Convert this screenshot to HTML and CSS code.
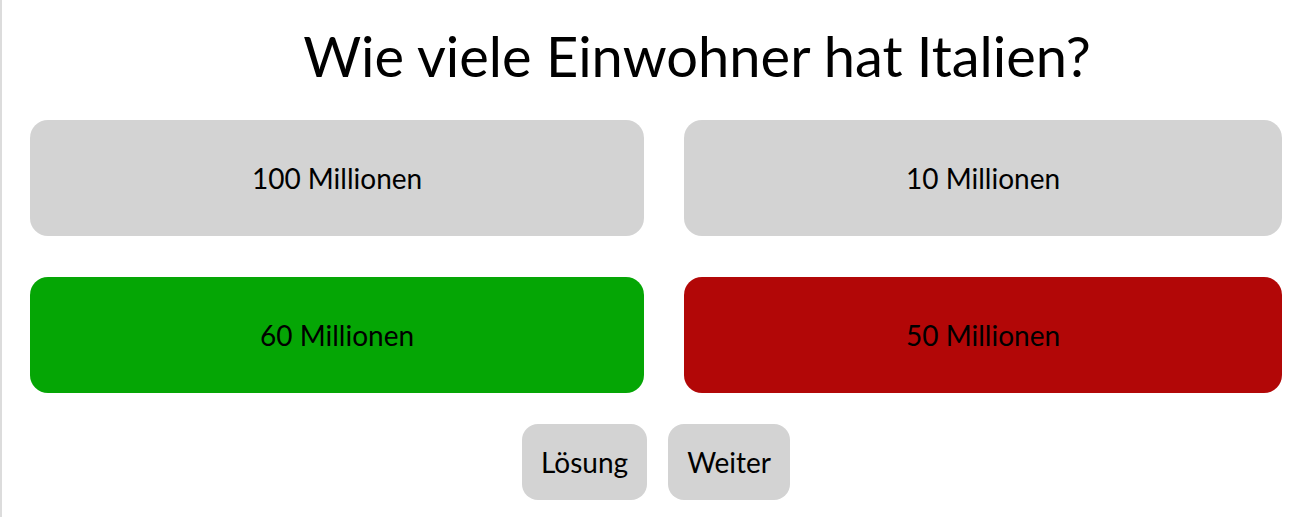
FILE: index.html
```html
<!DOCTYPE html>
<html lang="de">
<head>
<meta charset="utf-8">
<title>Quiz</title>
<link rel="stylesheet" href="styles.css">
</head>
<body>
<main class="quiz">
  <h1 class="question">Wie viele Einwohner hat Italien?</h1>
  <div class="answers">
    <div class="answer">100 Millionen</div>
    <div class="answer">10 Millionen</div>
    <div class="answer answer--correct">60 Millionen</div>
    <div class="answer answer--wrong">50 Millionen</div>
  </div>
  <div class="controls">
    <button class="control" type="button">Lösung</button>
    <button class="control" type="button">Weiter</button>
  </div>
</main>
</body>
</html>
```

FILE: styles.css
```css
html, body {
  margin: 0;
  padding: 0;
  background: #ffffff;
}

body {
  font-family: "Lato", "Open Sans", sans-serif;
  color: #000000;
}

.quiz {
  box-sizing: border-box;
  width: 1311px;
  height: 517px;
  border-left: 2px solid #dcdcdc;
  padding: 0 29px 0 28px;
  display: flex;
  flex-direction: column;
}

.question {
  margin: 24px 0 0 0;
  padding-left: 82px;
  text-align: center;
  font-weight: 400;
  font-size: 56px;
  line-height: 64px;
}

.answers {
  margin-top: 32px;
  display: grid;
  grid-template-columns: auto auto;
  column-gap: 40px;
  row-gap: 41px;
}

.answer {
  height: 116px;
  border-radius: 18px;
  background: #d3d3d3;
  display: flex;
  align-items: center;
  justify-content: center;
  font-size: 28px;
}

.answer--correct {
  background: #05a605;
}

.answer--wrong {
  background: #b20707;
}

.controls {
  margin-top: 31px;
  display: flex;
  justify-content: center;
  gap: 21px;
}

.control {
  height: 76px;
  padding: 0 19px;
  border: none;
  border-radius: 16px;
  background: #d3d3d3;
  font-family: inherit;
  font-size: 28px;
  color: #000000;
}
```
